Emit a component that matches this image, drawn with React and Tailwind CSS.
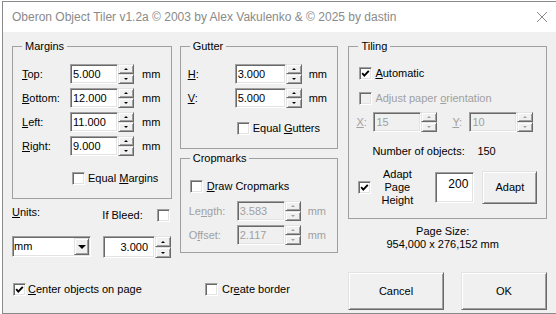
import React from 'react';

const sunken =
  'border border-t-[#a0a0a0] border-l-[#a0a0a0] border-r-white border-b-white shadow-[inset_1px_1px_0_#696969,inset_-1px_-1px_0_#e3e3e3]';
const raised =
  'border border-t-[#e3e3e3] border-l-[#e3e3e3] border-r-[#696969] border-b-[#696969] shadow-[inset_1px_1px_0_#fff,inset_-1px_-1px_0_#a0a0a0]';

const Group = ({ title, className, children }) => (
  <div className={`relative border border-[#a0a0a0] ${className}`}>
    <span className="absolute left-[9px] -top-[7px] bg-[#f0f0f0] px-[3px] leading-[13px]">{title}</span>
    {children}
  </div>
);

const Check = ({ checked, disabled }) => (
  <div
    className={`w-[13px] h-[13px] shrink-0 flex items-center justify-center ${sunken} ${
      disabled ? 'bg-[#f0f0f0]' : 'bg-white'
    }`}
  >
    {checked && (
      <svg width="9" height="9" viewBox="0 0 9 9">
        <path d="M1.2 4.2 L3.3 6.6 L7.8 1.8" fill="none" stroke="black" strokeWidth="1.9" />
      </svg>
    )}
  </div>
);

const Spin = ({ disabled, h = 'h-[20px]' }) => (
  <div className={`flex flex-col w-[16px] shrink-0 ${h}`}>
    <div className={`flex-1 flex items-center justify-center bg-[#f0f0f0] ${raised}`}>
      <div
        className={`w-0 h-0 border-x-[2px] border-x-transparent border-b-[2px] ${
          disabled ? 'border-b-[#a0a0a0]' : 'border-b-black'
        }`}
      />
    </div>
    <div className={`flex-1 flex items-center justify-center bg-[#f0f0f0] ${raised}`}>
      <div
        className={`w-0 h-0 border-x-[2px] border-x-transparent border-t-[2px] ${
          disabled ? 'border-t-[#a0a0a0]' : 'border-t-black'
        }`}
      />
    </div>
  </div>
);

const Field = ({ value, w, disabled }) => (
  <div
    className={`${w} h-[20px] shrink-0 flex items-center pl-[2px] pt-[1px] ${sunken} ${
      disabled ? 'bg-[#f0f0f0] text-[#a0a0a0]' : 'bg-white'
    }`}
  >
    {value}
  </div>
);

const Row = ({ label, value, labelW, fieldW, gap, disabled }) => (
  <div className={`flex items-center h-[20px] ${disabled ? 'text-[#a0a0a0]' : ''}`}>
    <span className={labelW}>{label}</span>
    <Field w={fieldW} value={value} disabled={disabled} />
    <Spin disabled={disabled} />
    <span className={gap}>mm</span>
  </div>
);

const Button = ({ children, className }) => (
  <div className={`flex items-center justify-center bg-[#f0f0f0] ${raised} ${className}`}>{children}</div>
);

export default function App() {
  return (
    <div className="w-[556px] h-[314px] bg-white pl-[2px] pt-[1px] font-['Liberation_Sans',Arial,sans-serif] text-[11px] leading-[13px] text-black">
      <div className="h-full flex flex-col border-l border-t border-b border-[#8a8a8a]">
        {/* Title bar */}
        <div className="h-[30px] shrink-0 bg-white flex items-center pl-[9px] pr-[9px] text-[12px] text-[#8a8a8a]">
          <span>Oberon Object Tiler v1.2a © 2003 by Alex Vakulenko &amp; © 2025 by dastin</span>
          <svg className="ml-auto" width="10" height="10" viewBox="0 0 10 10">
            <path d="M0 0 L10 10 M10 0 L0 10" stroke="#8a8a8a" strokeWidth="1" />
          </svg>
        </div>

        <div className="flex-1 bg-[#f0f0f0] pl-[9px] pr-[9px] pt-[14px] flex flex-col">
          <div className="h-[226px] flex items-start">
            {/* Margins column */}
            <div className="w-[160px] flex flex-col">
              <Group title="Margins" className="h-[153px] pt-[17px] pl-[9px]">
                <div className="flex flex-col gap-[4px]">
                  <Row label={<><u>T</u>op:</>} value="5.000" labelW="w-[48px]" fieldW="w-[48px]" gap="ml-[8px]" />
                  <Row label={<><u>B</u>ottom:</>} value="12.000" labelW="w-[48px]" fieldW="w-[48px]" gap="ml-[8px]" />
                  <Row label={<><u>L</u>eft:</>} value="11.000" labelW="w-[48px]" fieldW="w-[48px]" gap="ml-[8px]" />
                  <Row label={<><u>R</u>ight:</>} value="9.000" labelW="w-[48px]" fieldW="w-[48px]" gap="ml-[8px]" />
                </div>
                <div className="flex items-center gap-[3px] mt-[16px] pl-[50px]">
                  <Check />
                  <span>Equal <u>M</u>argins</span>
                </div>
              </Group>

              <div className="flex items-start mt-[7px]">
                <span><u>U</u>nits:</span>
                <div className="ml-auto mr-[2px] mt-[3px] flex items-center gap-[14px]">
                  <span>If Bleed:</span>
                  <Check />
                </div>
              </div>

              <div className="flex items-start mt-[14px]">
                <div className={`w-[79px] h-[21px] flex items-center pl-[1px] bg-white ${sunken}`}>
                  <span>mm</span>
                  <div className={`ml-auto mr-[1px] w-[15px] h-[17px] flex items-center justify-center bg-[#f0f0f0] ${raised}`}>
                    <div className="w-0 h-0 border-x-[4px] border-x-transparent border-t-[4px] border-t-black" />
                  </div>
                </div>
                <div className={`ml-[12px] w-[52px] h-[22px] flex items-center justify-end pr-[6px] bg-white ${sunken}`}>
                  3.000
                </div>
                <Spin h="h-[22px]" />
              </div>
            </div>

            {/* Gutter / Cropmarks column */}
            <div className="ml-[8px] w-[159px] flex flex-col">
              <Group title="Gutter" className="h-[103px] pt-[17px] pl-[7px]">
                <div className="flex flex-col gap-[4px]">
                  <Row label={<><u>H</u>:</>} value="3.000" labelW="w-[47px]" fieldW="w-[51px]" gap="ml-[7px]" />
                  <Row label={<><u>V</u>:</>} value="5.000" labelW="w-[47px]" fieldW="w-[51px]" gap="ml-[7px]" />
                </div>
                <div className="flex items-center gap-[3px] mt-[14px] pl-[49px]">
                  <Check />
                  <span>Equal <u>G</u>utters</span>
                </div>
              </Group>

              <Group title="Cropmarks" className="mt-[9px] h-[95px] pt-[21px] pl-[8px]">
                <div className="flex items-center gap-[4px] ml-[1px]">
                  <Check />
                  <span><u>D</u>raw Cropmarks</span>
                </div>
                <div className="flex flex-col gap-[4px] mt-[8px]">
                  <Row label={<>Le<u>n</u>gth:</>} value="3.583" labelW="w-[48px]" fieldW="w-[48px]" gap="ml-[7px]" disabled />
                  <Row label={<>O<u>f</u>fset:</>} value="2.117" labelW="w-[48px]" fieldW="w-[48px]" gap="ml-[7px]" disabled />
                </div>
              </Group>
            </div>

            {/* Tiling column */}
            <div className="ml-[10px] w-[199px] flex flex-col">
              <Group title="Tiling" className="h-[173px] pt-[20px] pl-[10px]">
                <div className="flex items-center gap-[3px]">
                  <Check checked />
                  <span><u>A</u>utomatic</span>
                </div>
                <div className="flex items-center gap-[3px] mt-[12px] text-[#a0a0a0]">
                  <Check disabled />
                  <span>Adjust paper <u>o</u>rientation</span>
                </div>
                <div className="flex items-center h-[20px] mt-[7px] -ml-[3px] text-[#a0a0a0]">
                  <span className="w-[17px]"><u>X</u>:</span>
                  <Field w="w-[48px]" value="15" disabled />
                  <Spin disabled />
                  <span className="w-[17px] ml-[15px]"><u>Y</u>:</span>
                  <Field w="w-[48px]" value="10" disabled />
                  <Spin disabled />
                </div>
                <div className="flex mt-[13px] ml-[13px]">
                  <span className="w-[105px]">Number of objects:</span>
                  <span>150</span>
                </div>
                <div className="flex items-center h-[33px] mt-[13px] -ml-[1px]">
                  <Check checked />
                  <div className="ml-[4px] w-[44px] text-center flex flex-col">
                    <span>Adapt</span>
                    <span>Page</span>
                    <span>Height</span>
                  </div>
                  <div className={`ml-[16px] w-[39px] h-[31px] bg-white text-right pr-[5px] pt-[4px] text-[12px] leading-[14px] ${sunken}`}>
                    200
                  </div>
                  <Button className="ml-[8px] w-[55px] h-[33px]">Adapt</Button>
                </div>
              </Group>
              <div className="mt-[6px] pr-[10px] text-center flex flex-col">
                <span>Page Size:</span>
                <span>954,000 x 276,152 mm</span>
              </div>
            </div>
          </div>

          {/* Bottom row */}
          <div className="h-[38px] flex items-start">
            <div className="w-[193px] flex items-center gap-[2px] mt-[11px] pl-[1px]">
              <Check checked />
              <span><u>C</u>enter objects on page</span>
            </div>
            <div className="flex items-center gap-[4px] mt-[11px]">
              <Check />
              <span>Cr<u>e</u>ate border</span>
            </div>
            <Button className="ml-auto w-[96px] h-[38px]">Cancel</Button>
            <Button className="ml-[17px] w-[86px] h-[38px]">OK</Button>
          </div>
        </div>
      </div>
    </div>
  );
}
